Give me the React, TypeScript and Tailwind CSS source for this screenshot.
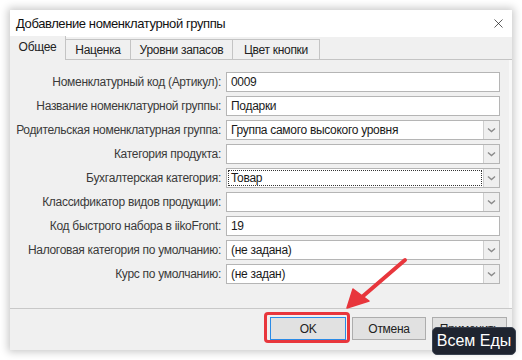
import { X } from "lucide-react";

type Row = {
  label: string;
  value: string;
  combo?: boolean;
  focused?: boolean;
};

const rows: Row[] = [
  { label: "Номенклатурный код (Артикул):", value: "0009" },
  { label: "Название номенклатурной группы:", value: "Подарки" },
  { label: "Родительская номенклатурная группа:", value: "Группа самого высокого уровня", combo: true },
  { label: "Категория продукта:", value: "", combo: true },
  { label: "Бухгалтерская категория:", value: "Товар", combo: true, focused: true },
  { label: "Классификатор видов продукции:", value: "", combo: true },
  { label: "Код быстрого набора в iikoFront:", value: "19" },
  { label: "Налоговая категория по умолчанию:", value: "(не задана)", combo: true },
  { label: "Курс по умолчанию:", value: "(не задан)", combo: true },
];

const tabs = [
  { name: "Общее", w: "w-[56px]" },
  { name: "Наценка", w: "w-[65px]" },
  { name: "Уровни запасов", w: "w-[102px]" },
  { name: "Цвет кнопки", w: "w-[87px]" },
];

const Chevron = () => (
  <svg width="9" height="6" viewBox="0 0 9 6" fill="none">
    <path d="M1 1.5 L4.5 4.5 L8 1.5" stroke="#8a8a8a" strokeWidth="1.4" />
  </svg>
);

const Field = ({ row }: { row: Row }) => (
  <div className="flex h-[20px] items-center">
    <div className="w-[216px] whitespace-nowrap pr-[5px] text-right text-[#3a3a3a]">{row.label}</div>
    <div className="flex h-[20px] w-[274px] border border-[#b5b5b5] bg-white">
      <div className="flex min-w-0 flex-1 items-center p-[1px]">
        <div
          className={
            "flex h-full flex-1 items-center whitespace-nowrap pl-[2px] text-[#1a1a1a] " +
            (row.focused ? "border border-dotted border-[#333]" : "border border-transparent")
          }
        >
          {row.value}
        </div>
      </div>
      {row.combo && (
        <div className="flex w-[16px] items-center justify-center border-l border-[#cfcfcf] bg-[#efefef]">
          <Chevron />
        </div>
      )}
    </div>
  </div>
);

export default function App() {
  return (
    <div
      className="relative h-[360px] w-[522px] overflow-hidden bg-white text-[12px] tracking-[-0.3px]"
      style={{ fontFamily: '"Liberation Sans", "Noto Sans", sans-serif' }}
    >
      <div className="pl-[10px] pt-[10px]">
        <div className="flex w-[502px] flex-col bg-[#f0f0f0] shadow-[0_0_8px_2px_rgba(0,0,0,0.22)]">
          {/* title bar */}
          <div className="flex h-[27px] items-center justify-between bg-white pl-[6px] pr-[6px]">
            <span className="whitespace-nowrap text-[13px] tracking-[-0.4px] text-[#111]">
              Добавление номенклатурной группы
            </span>
            <X size={15} strokeWidth={1.1} color="#111" />
          </div>

          {/* tabs */}
          <div className="flex h-[23px] items-end border-b border-[#c4c4c4]">
            {tabs.map((t, i) =>
              i === 0 ? (
                <div
                  key={t.name}
                  className={`relative -mb-px flex h-[24px] ${t.w} items-center justify-center border-r border-[#c4c4c4] bg-[#f0f0f0] pb-[2px] text-[#222]`}
                >
                  {t.name}
                </div>
              ) : (
                <div
                  key={t.name}
                  className={`flex h-[20px] ${t.w} items-center justify-center border-r border-t border-[#c4c4c4] bg-[#f0f0f0] text-[#222]`}
                >
                  {t.name}
                </div>
              )
            )}
          </div>

          {/* body */}
          <div className="flex h-[248px] flex-col gap-[4px] border-r-[3px] border-[#f8f8f8] pt-[12px]">
            {rows.map((r) => (
              <Field key={r.label} row={r} />
            ))}
          </div>

          {/* footer */}
          <div className="flex h-[42px] items-start justify-end gap-[6px] border-t border-[#c8c8c8] pr-[5px] pt-[8px]">
            <div className="relative">
              <div className="flex h-[23px] w-[76px] items-center justify-center border border-[#2a8ae6] bg-[#e1e1e1] text-[#222]">
                OK
              </div>
              <div className="absolute -bottom-[3px] -left-[6px] -right-[4px] -top-[5px] rounded-[4px] border-[3px] border-[#e8363c]" />
            </div>
            <div className="flex h-[23px] w-[74px] items-center justify-center border border-[#adadad] bg-[#e1e1e1] text-[#222]">
              Отмена
            </div>
            <div className="flex h-[23px] w-[75px] items-center justify-center border border-[#adadad] bg-[#e1e1e1] text-[#222]">
              Применить
            </div>
          </div>
        </div>
      </div>

      {/* annotation arrow */}
      <svg className="absolute left-0 top-0" width="522" height="360" viewBox="0 0 522 360">
        <line x1="405" y1="260" x2="362" y2="297" stroke="#e8363c" strokeWidth="4" strokeLinecap="round" />
        <polygon points="347,308 353,289 369,301" fill="#e8363c" stroke="#e8363c" strokeWidth="1.5" strokeLinejoin="round" />
      </svg>

      {/* tooltip */}
      <div className="absolute left-[432px] top-[327px] flex h-[28px] w-[84px] items-center justify-center rounded-[5px] border border-[#3a4250] bg-[#1f2430] text-[16px] tracking-normal text-white">
        Всем Еды
      </div>
    </div>
  );
}
